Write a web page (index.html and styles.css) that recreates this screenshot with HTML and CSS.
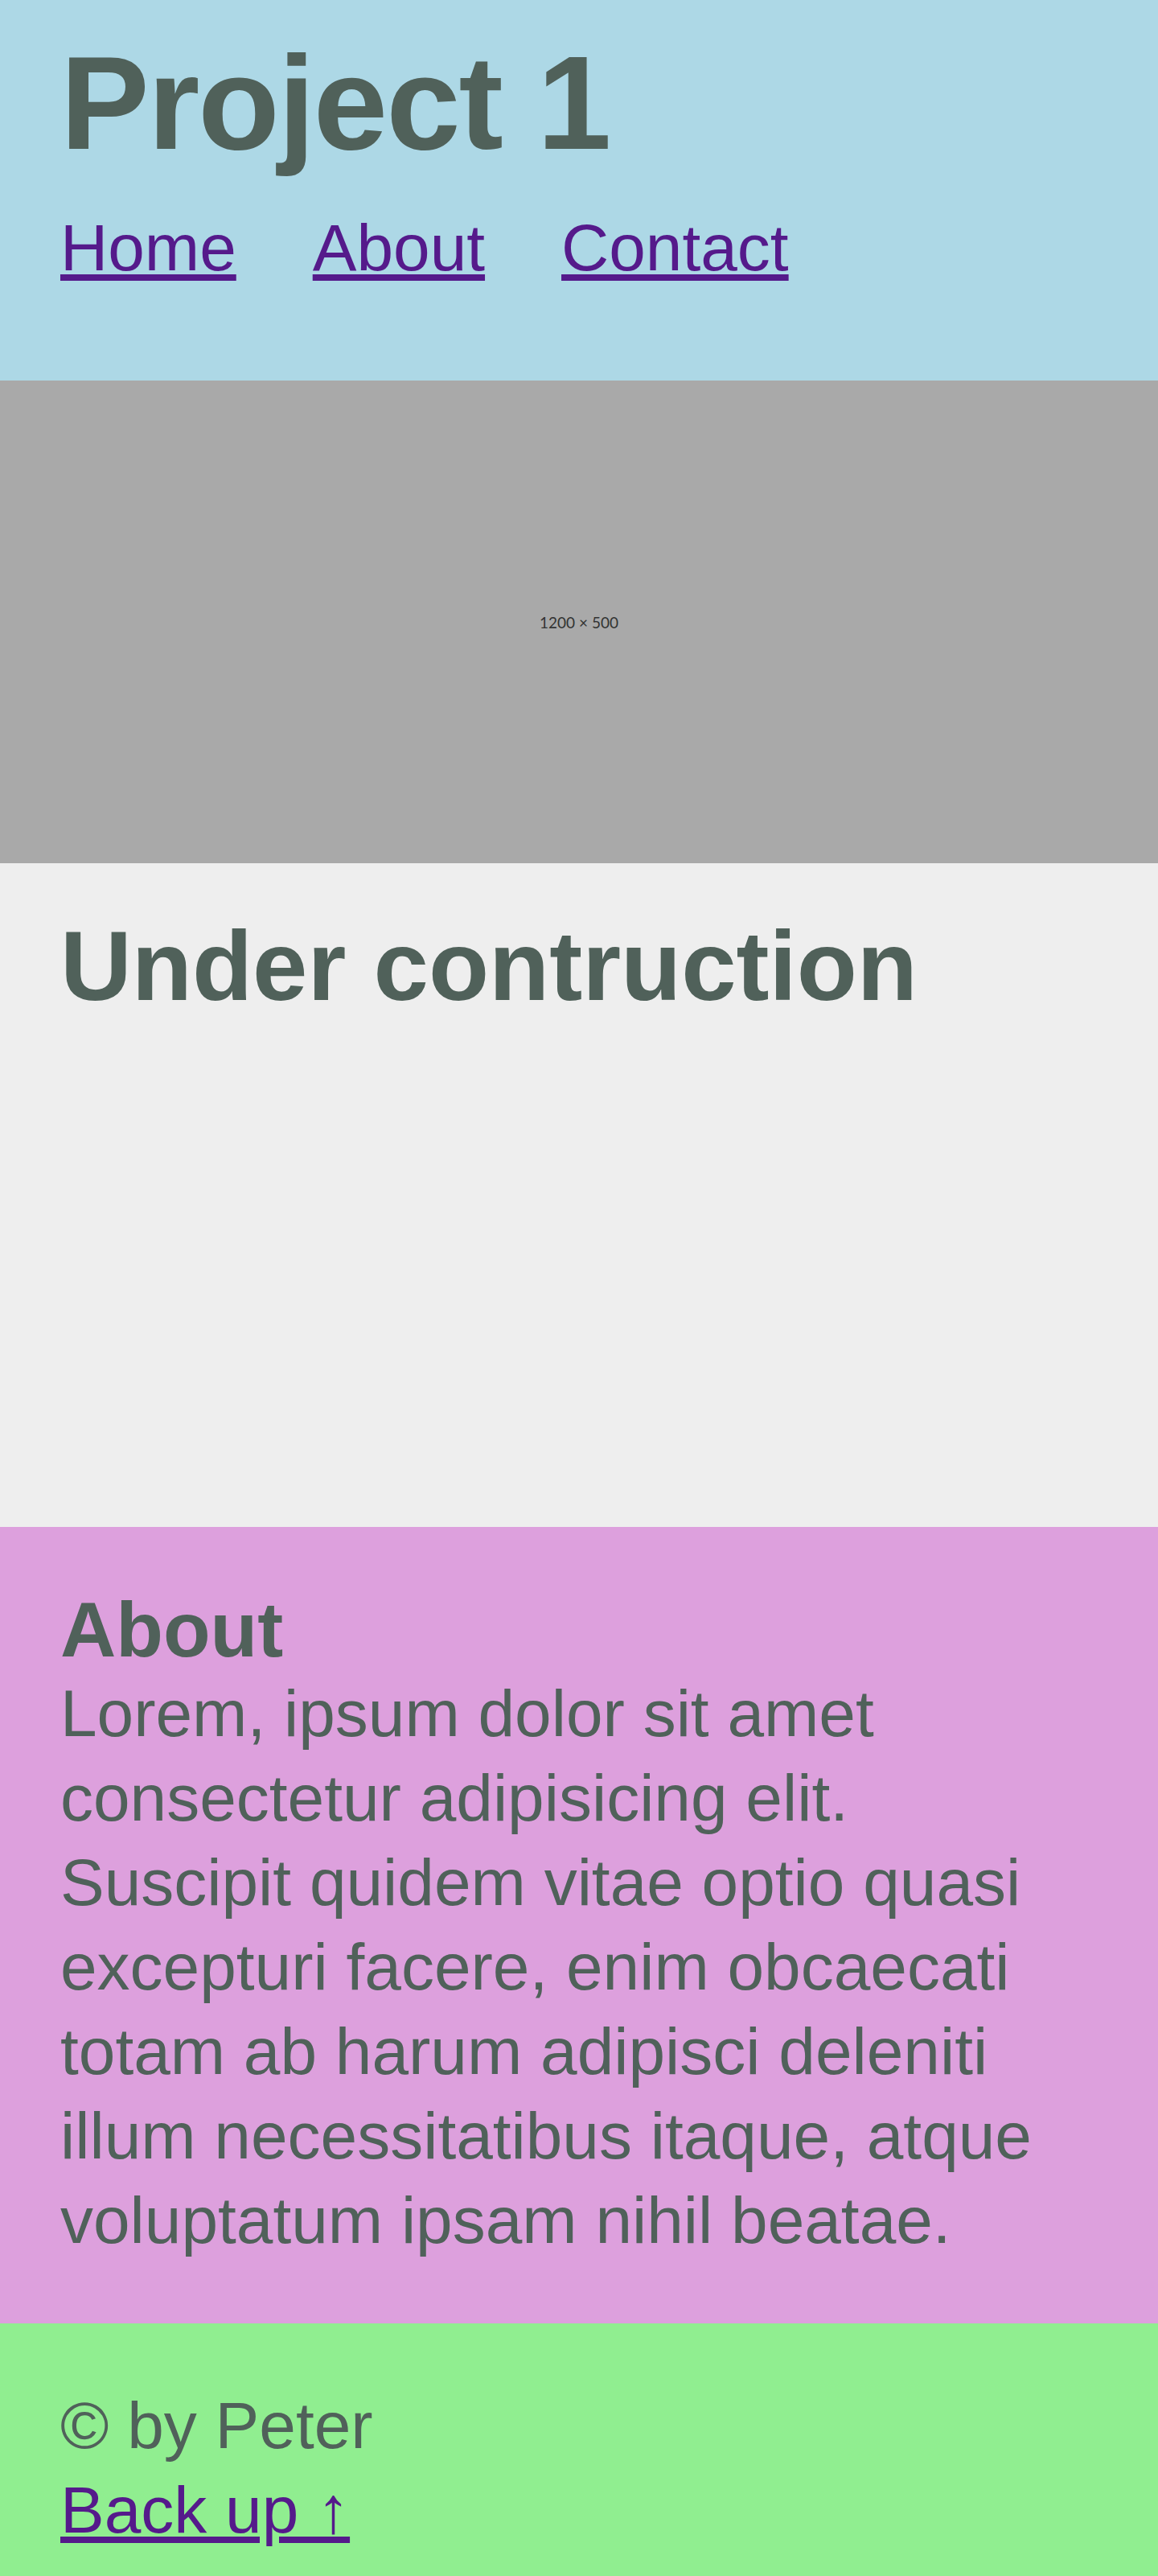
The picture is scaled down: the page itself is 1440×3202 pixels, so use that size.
FILE: index.html
```html
<!DOCTYPE html>
<html lang="en">
<head>
<meta charset="utf-8">
<title>Project 1</title>
<link rel="stylesheet" href="styles.css">
</head>
<body>
<header class="site-header" id="top">
  <h1 class="site-title">Project 1</h1>
  <nav class="main-nav">
    <a href="#top">Home</a>
    <a href="#about">About</a>
    <a href="#contact">Contact</a>
  </nav>
</header>
<div class="hero">
  <span class="hero-label">1200 × 500</span>
</div>
<section class="construction">
  <h2 class="construction-title">Under contruction</h2>
</section>
<section class="about" id="about">
  <h2 class="about-title">About</h2>
  <p class="about-text">Lorem, ipsum dolor sit amet consectetur adipisicing elit. Suscipit quidem vitae optio quasi excepturi facere, enim obcaecati totam ab harum adipisci deleniti illum necessitatibus itaque, atque voluptatum ipsam nihil beatae.</p>
</section>
<footer class="site-footer" id="contact">
  <p class="footer-line">© by Peter</p>
  <p class="footer-line"><a href="#top">Back up ↑</a></p>
</footer>
</body>
</html>
```
FILE: styles.css
```css
html, body {
  margin: 0;
  padding: 0;
}

body {
  font-family: "Liberation Sans", Arial, sans-serif;
  color: #50615a;
}

a,
a:visited {
  color: #551a8b;
}

.site-header {
  background: #add8e6;
  padding: 45px 75px 118px;
}

.site-title {
  margin: 0;
  font-size: 166px;
  line-height: 166px;
  font-weight: 700;
  letter-spacing: -2px;
}

.main-nav {
  margin-top: 50px;
  display: flex;
  gap: 95px;
  font-size: 82px;
  line-height: 94px;
}

.hero {
  height: 600px;
  background: #a9a9a9;
  display: flex;
  align-items: center;
  justify-content: center;
}

.hero-label {
  font-family: Lato, "Open Sans", sans-serif;
  font-size: 19px;
  color: #333333;
}

.construction {
  background: #eeeeee;
  box-sizing: border-box;
  height: 825px;
  padding: 58px 75px 0;
}

.construction-title {
  margin: 0;
  font-size: 123px;
  line-height: 139px;
  font-weight: 700;
}

.about {
  background: #dda0dd;
  padding: 80px 100px 76px 75px;
}

.about-title {
  margin: 0;
  font-size: 96px;
  line-height: 96px;
  font-weight: 700;
}

.about-text {
  margin: 3px 0 0;
  font-size: 82px;
  line-height: 105px;
}

.site-footer {
  background: #90ee90;
  padding: 74px 75px 30px;
}

.footer-line {
  margin: 0;
  font-size: 82px;
  line-height: 105px;
}
```
